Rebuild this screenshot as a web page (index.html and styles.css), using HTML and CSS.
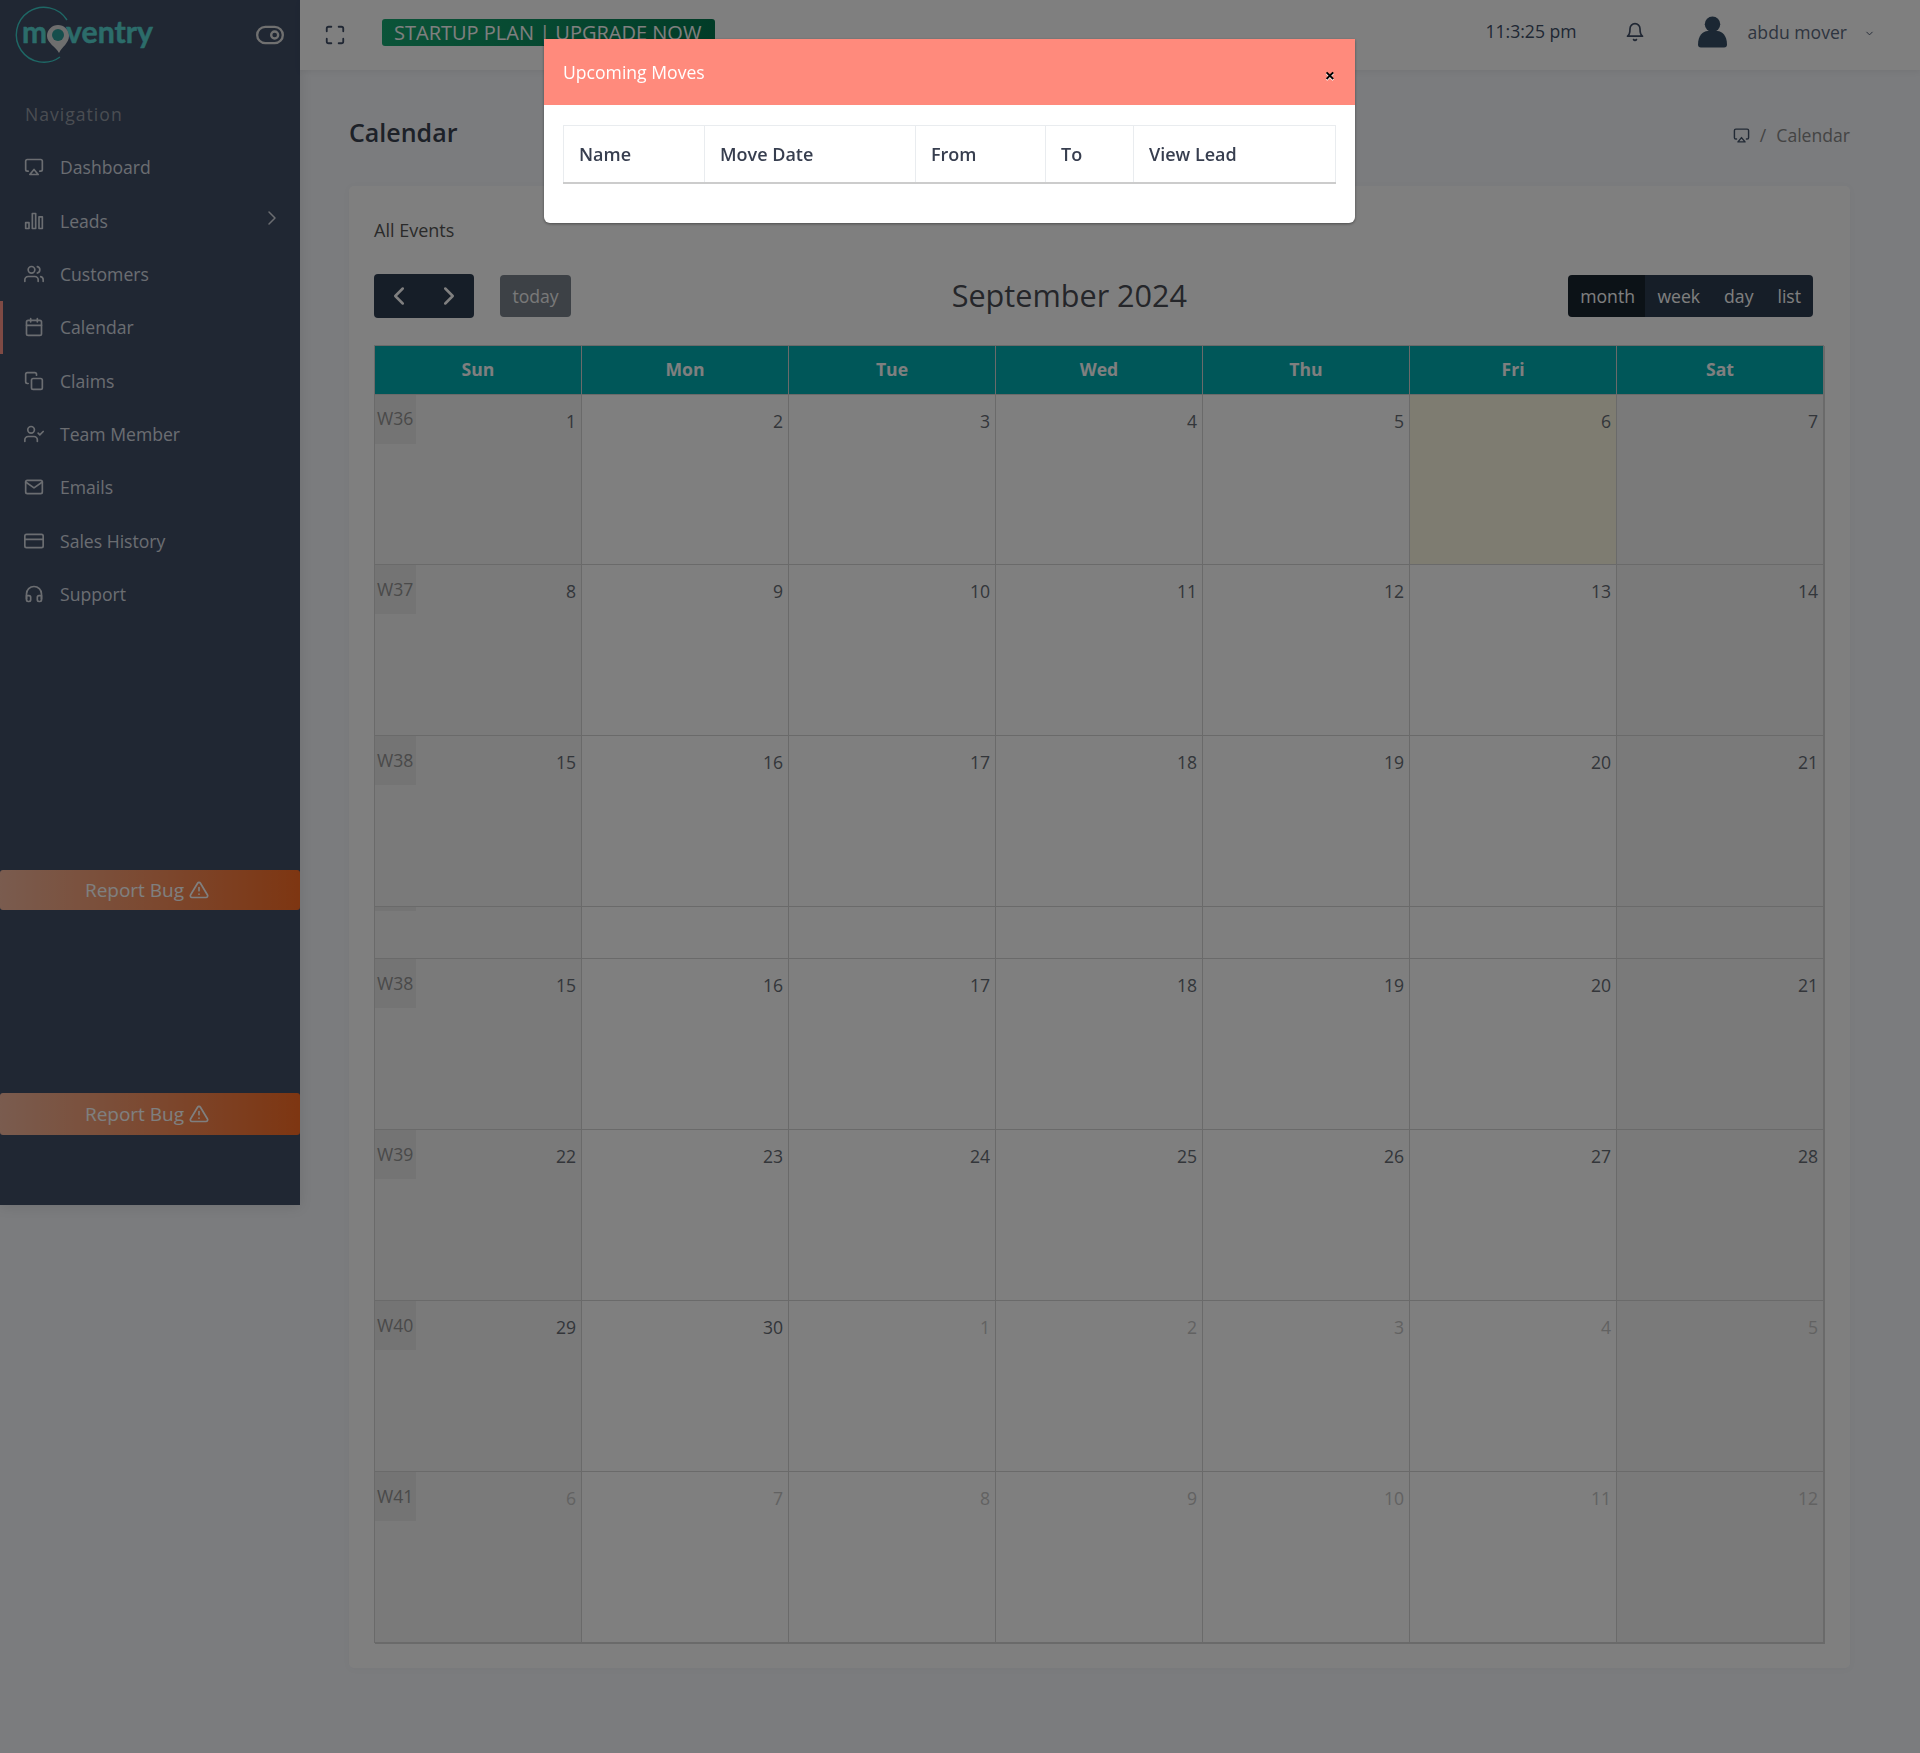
FILE: index.html
```html
<!DOCTYPE html>
<html lang="en">
<head>
  <meta charset="UTF-8" />
  <meta name="viewport" content="width=device-width, initial-scale=1.0"/>
  <title>Moventry - Calendar</title>
  <link rel="stylesheet" href="styles.css">
</head>
<body>
  <div class="layout">
    <aside class="sidebar">
      <div class="brand">
        <svg class="logo" viewBox="0 0 160 70" width="160" height="70">
          <path class="logo-ring" d="M57 20A27.500 27.500 0 1 0 50 57"/>
          <text class="logo-text" x="12" y="43" textLength="25" lengthAdjust="spacingAndGlyphs">m</text>
          <path class="logo-pin" d="M48 25a11 11 0 0 1 11 11c0 7-7 11-10 17c-3-6-12-10-12-17a11 11 0 0 1 11-11z"/>
          <circle class="logo-dot" cx="48" cy="35" r="6"/>
          <text class="logo-text" x="56" y="43" textLength="87" lengthAdjust="spacingAndGlyphs">ventry</text>
        </svg>
        <svg class="icon toggle" viewBox="0 0 24 24" width="28" height="28"><rect x="1" y="5" width="22" height="14" rx="7"/><circle cx="16" cy="12" r="3"/></svg>
      </div>

      <p class="nav-label">Navigation</p>
      <nav class="nav">
        <a class="nav-item"><svg class="icon" viewBox="0 0 24 24"><path d="M5 17H4a2 2 0 0 1-2-2V5a2 2 0 0 1 2-2h16a2 2 0 0 1 2 2v10a2 2 0 0 1-2 2h-1"/><polygon points="12 15 17 21 7 21 12 15"/></svg>Dashboard</a>
        <a class="nav-item"><svg class="icon" viewBox="0 0 24 24"><rect x="2" y="14" width="4" height="7"/><rect x="10" y="3" width="4" height="18"/><rect x="18" y="7" width="4" height="14"/></svg>Leads<svg class="icon nav-arrow" viewBox="0 0 24 24"><polyline points="9 18 15 12 9 6"/></svg></a>
        <a class="nav-item"><svg class="icon" viewBox="0 0 24 24"><path d="M17 21v-2a4 4 0 0 0-4-4H5a4 4 0 0 0-4 4v2"/><circle cx="9" cy="7" r="4"/><path d="M23 21v-2a4 4 0 0 0-3-3.870"/><path d="M16 3.130a4 4 0 0 1 0 7.750"/></svg>Customers</a>
        <a class="nav-item active"><svg class="icon" viewBox="0 0 24 24"><rect x="3" y="4" width="18" height="18" rx="2"/><line x1="16" y1="2" x2="16" y2="6"/><line x1="8" y1="2" x2="8" y2="6"/><line x1="3" y1="10" x2="21" y2="10"/></svg>Calendar</a>
        <a class="nav-item"><svg class="icon" viewBox="0 0 24 24"><rect x="9" y="9" width="13" height="13" rx="2"/><path d="M5 15H4a2 2 0 0 1-2-2V4a2 2 0 0 1 2-2h9a2 2 0 0 1 2 2v1"/></svg>Claims</a>
        <a class="nav-item"><svg class="icon" viewBox="0 0 24 24"><path d="M16 21v-2a4 4 0 0 0-4-4H5a4 4 0 0 0-4 4v2"/><circle cx="8.500" cy="7" r="4"/><polyline points="17 11 19 13 23 9"/></svg>Team Member</a>
        <a class="nav-item"><svg class="icon" viewBox="0 0 24 24"><path d="M4 4h16c1.100 0 2 .9 2 2v12c0 1.100-.9 2-2 2H4c-1.100 0-2-.9-2-2V6c0-1.100.9-2 2-2z"/><polyline points="22,6 12,13 2,6"/></svg>Emails</a>
        <a class="nav-item"><svg class="icon" viewBox="0 0 24 24"><rect x="1" y="4" width="22" height="16" rx="2"/><line x1="1" y1="10" x2="23" y2="10"/></svg>Sales History</a>
        <a class="nav-item"><svg class="icon" viewBox="0 0 24 24"><path d="M3 18v-6a9 9 0 0 1 18 0v6"/><path d="M21 19a2 2 0 0 1-2 2h-1a2 2 0 0 1-2-2v-3a2 2 0 0 1 2-2h3zM3 19a2 2 0 0 0 2 2h1a2 2 0 0 0 2-2v-3a2 2 0 0 0-2-2H3z"/></svg>Support</a>
      </nav>

      <a class="report-bug first">Report Bug <svg class="icon" viewBox="0 0 24 24"><path d="M10.290 3.860L1.820 18a2 2 0 0 0 1.710 3h16.940a2 2 0 0 0 1.710-3L13.710 3.860a2 2 0 0 0-3.420 0z"/><line x1="12" y1="9" x2="12" y2="13"/><line x1="12" y1="17" x2="12.010" y2="17"/></svg></a>
      <a class="report-bug second">Report Bug <svg class="icon" viewBox="0 0 24 24"><path d="M10.290 3.860L1.820 18a2 2 0 0 0 1.710 3h16.940a2 2 0 0 0 1.710-3L13.710 3.860a2 2 0 0 0-3.420 0z"/><line x1="12" y1="9" x2="12" y2="13"/><line x1="12" y1="17" x2="12.010" y2="17"/></svg></a>
    </aside>

    <div class="main">
      <header class="topbar">
        <svg class="icon expand" viewBox="0 0 24 24" width="24" height="24"><path d="M8 3H5a2 2 0 0 0-2 2v3m18 0V5a2 2 0 0 0-2-2h-3m0 18h3a2 2 0 0 0 2-2v-3M3 16v3a2 2 0 0 0 2 2h3"/></svg>
        <a class="plan">STARTUP PLAN | UPGRADE NOW</a>
        <div class="topbar-right">
          <span class="clock">11:3:25 pm</span>
          <svg class="icon bell" viewBox="0 0 24 24"><path d="M18 8A6 6 0 0 0 6 8c0 7-3 9-3 9h18s-3-2-3-9"/><path d="M13.730 21a2 2 0 0 1-3.460 0"/></svg>
          <svg class="avatar" viewBox="0 0 30 32"><circle cx="15" cy="8" r="8"/><path d="M0 29c0-9 5-14 10-14h10c5 0 10 5 10 14a3 3 0 0 1-3 3H3a3 3 0 0 1-3-3z"/></svg>
          <span class="username">abdu mover</span>
          <svg class="icon caret" viewBox="0 0 24 24"><polyline points="6 9 12 15 18 9"/></svg>
        </div>
      </header>

      <div class="page-head">
        <h1>Calendar</h1>
        <div class="crumbs">
          <svg class="icon" viewBox="0 0 24 24"><path d="M5 17H4a2 2 0 0 1-2-2V5a2 2 0 0 1 2-2h16a2 2 0 0 1 2 2v10a2 2 0 0 1-2 2h-1"/><polygon points="12 15 17 21 7 21 12 15"/></svg>
          <span>/</span>
          <span>Calendar</span>
        </div>
      </div>

      <section class="card">
        <h2>All Events</h2>
        <div class="toolbar">
          <div class="toolbar-left">
            <div class="btn-group pager">
              <button class="btn"><svg class="icon" viewBox="0 0 24 24"><polyline points="15 18 9 12 15 6"/></svg></button>
              <button class="btn"><svg class="icon" viewBox="0 0 24 24"><polyline points="9 18 15 12 9 6"/></svg></button>
            </div>
            <button class="btn today">today</button>
          </div>
          <h3>September 2024</h3>
          <div class="btn-group views">
            <button class="btn on">month</button>
            <button class="btn">week</button>
            <button class="btn">day</button>
            <button class="btn">list</button>
          </div>
        </div>

        <table class="cal">
          <thead>
            <tr><th>Sun</th><th>Mon</th><th>Tue</th><th>Wed</th><th>Thu</th><th>Fri</th><th>Sat</th></tr>
          </thead>
          <tbody>
            <tr class="week first-week">
              <td class="off"><div class="cell"><span class="wk">W36</span><span class="num">1</span></div></td>
              <td><div class="cell"><span class="num">2</span></div></td>
              <td><div class="cell"><span class="num">3</span></div></td>
              <td><div class="cell"><span class="num">4</span></div></td>
              <td><div class="cell"><span class="num">5</span></div></td>
              <td class="now"><div class="cell"><span class="num">6</span></div></td>
              <td class="off"><div class="cell"><span class="num">7</span></div></td>
            </tr>
            <tr class="week">
              <td class="off"><div class="cell"><span class="wk">W37</span><span class="num">8</span></div></td>
              <td><div class="cell"><span class="num">9</span></div></td>
              <td><div class="cell"><span class="num">10</span></div></td>
              <td><div class="cell"><span class="num">11</span></div></td>
              <td><div class="cell"><span class="num">12</span></div></td>
              <td><div class="cell"><span class="num">13</span></div></td>
              <td class="off"><div class="cell"><span class="num">14</span></div></td>
            </tr>
            <tr class="week">
              <td class="off"><div class="cell"><span class="wk">W38</span><span class="num">15</span></div></td>
              <td><div class="cell"><span class="num">16</span></div></td>
              <td><div class="cell"><span class="num">17</span></div></td>
              <td><div class="cell"><span class="num">18</span></div></td>
              <td><div class="cell"><span class="num">19</span></div></td>
              <td><div class="cell"><span class="num">20</span></div></td>
              <td class="off"><div class="cell"><span class="num">21</span></div></td>
            </tr>
            <tr class="stub">
              <td class="off"><div class="cell"><span class="wk"></span></div></td>
              <td></td><td></td><td></td><td></td><td></td>
              <td class="off"></td>
            </tr>
            <tr class="week">
              <td class="off"><div class="cell"><span class="wk">W38</span><span class="num">15</span></div></td>
              <td><div class="cell"><span class="num">16</span></div></td>
              <td><div class="cell"><span class="num">17</span></div></td>
              <td><div class="cell"><span class="num">18</span></div></td>
              <td><div class="cell"><span class="num">19</span></div></td>
              <td><div class="cell"><span class="num">20</span></div></td>
              <td class="off"><div class="cell"><span class="num">21</span></div></td>
            </tr>
            <tr class="week">
              <td class="off"><div class="cell"><span class="wk">W39</span><span class="num">22</span></div></td>
              <td><div class="cell"><span class="num">23</span></div></td>
              <td><div class="cell"><span class="num">24</span></div></td>
              <td><div class="cell"><span class="num">25</span></div></td>
              <td><div class="cell"><span class="num">26</span></div></td>
              <td><div class="cell"><span class="num">27</span></div></td>
              <td class="off"><div class="cell"><span class="num">28</span></div></td>
            </tr>
            <tr class="week">
              <td class="off"><div class="cell"><span class="wk">W40</span><span class="num">29</span></div></td>
              <td><div class="cell"><span class="num">30</span></div></td>
              <td><div class="cell"><span class="num other">1</span></div></td>
              <td><div class="cell"><span class="num other">2</span></div></td>
              <td><div class="cell"><span class="num other">3</span></div></td>
              <td><div class="cell"><span class="num other">4</span></div></td>
              <td class="off"><div class="cell"><span class="num other">5</span></div></td>
            </tr>
            <tr class="week">
              <td class="off"><div class="cell"><span class="wk">W41</span><span class="num other">6</span></div></td>
              <td><div class="cell"><span class="num other">7</span></div></td>
              <td><div class="cell"><span class="num other">8</span></div></td>
              <td><div class="cell"><span class="num other">9</span></div></td>
              <td><div class="cell"><span class="num other">10</span></div></td>
              <td><div class="cell"><span class="num other">11</span></div></td>
              <td class="off"><div class="cell"><span class="num other">12</span></div></td>
            </tr>
          </tbody>
        </table>
      </section>
    </div>
  </div>

  <div class="backdrop">
    <div class="modal">
      <div class="modal-head">
        <h4>Upcoming Moves</h4>
        <button class="close">×</button>
      </div>
      <div class="modal-body">
        <table class="moves">
          <thead>
            <tr>
              <th class="col-name">Name</th>
              <th class="col-date">Move Date</th>
              <th class="col-from">From</th>
              <th class="col-to">To</th>
              <th>View Lead</th>
            </tr>
          </thead>
        </table>
      </div>
    </div>
  </div>
</body>
</html>
```

FILE: styles.css
```css
* {
  box-sizing: border-box;
}

body {
  margin: 0;
  min-height: 1753px;
  font-family: "Open Sans", sans-serif;
  font-size: 17.6px;
  background-color: #f6f8fc;
  color: #666;
}

.icon {
  width: 20px;
  height: 20px;
  fill: none;
  stroke: currentColor;
  stroke-width: 2;
  stroke-linecap: round;
  stroke-linejoin: round;
  flex-shrink: 0;
}

.layout {
  display: flex;
  align-items: flex-start;
}

/* sidebar */
.sidebar {
  width: 300px;
  height: 1205px;
  flex-shrink: 0;
  background: #404e67;
  color: #d6dbe2;
  box-shadow: 0 2px 12px rgba(0,0,0,0.1);
}

.brand {
  height: 70px;
  display: flex;
  align-items: center;
  justify-content: space-between;
  padding: 0 16px 0 10px;
}

.logo-ring {
  fill: none;
  stroke: #3ccfca;
  stroke-width: 1.4;
}

.logo-text {
  font-family: Lato, sans-serif;
  font-size: 31px;
  font-weight: 700;
  fill: #58d8d4;
  stroke: #58d8d4;
  stroke-width: 0.5;
  stroke-linejoin: round;
}

.logo-pin {
  fill: #dcdcdc;
}

.logo-dot {
  fill: #2c9c98;
}

.toggle {
  width: 28px;
  height: 28px;
  color: #e0e0e0;
}

.nav-label {
  margin: 0;
  padding: 32px 0 0 25px;
  height: 70.8px;
  line-height: 24px;
  font-size: 17.6px;
  letter-spacing: 1px;
  color: #959ba5;
}

.nav {
  display: flex;
  flex-direction: column;
}

.nav-item {
  height: 53.3px;
  display: flex;
  align-items: center;
  gap: 16px;
  padding-left: 24px;
  position: relative;
}

.nav-item.active {
  border-left: 3px solid #ff9488;
  padding-left: 21px;
}

.nav-arrow {
  position: absolute;
  right: 16px;
  top: 12px;
  width: 24px;
  height: 24px;
  stroke-width: 1.5;
}

.report-bug {
  display: flex;
  align-items: center;
  justify-content: center;
  gap: 5px;
  padding-right: 6px;
  font-size: 19px;
  color: #fff;
  background: linear-gradient(to right, #f4b89e, #fc6c24);
  border-radius: 3px;
}

.report-bug.first {
  height: 40px;
  padding-top: 1px;
  margin-top: 249.2px;
}

.report-bug.second {
  height: 42px;
  margin-top: 183px;
}

/* main area */
.main {
  flex: 1;
  min-width: 0;
}

.topbar {
  height: 70px;
  background: #fff;
  box-shadow: 0 2px 6px rgba(0,0,0,0.06);
  display: flex;
  align-items: flex-start;
  padding-left: 24px;
  color: #404e67;
}

.expand {
  width: 22px;
  height: 22px;
  margin-top: 24px;
}

.plan {
  margin: 19px 0 0 36px;
  height: 27px;
  line-height: 27px;
  padding: 0 14px 0 12px;
  font-size: 20px;
  color: #fff;
  background: linear-gradient(to right, #16a872, #03784f);
  border-radius: 3px;
  white-space: nowrap;
}

.topbar-right {
  margin-left: auto;
  height: 64px;
  display: flex;
  align-items: center;
}

.clock {
  margin-right: 48px;
  margin-top: -3px;
}

.bell {
  width: 20px;
  height: 20px;
  margin-right: 53px;
}

.avatar {
  width: 29px;
  height: 32px;
  fill: #364e66;
  margin-right: 21px;
}

.username {
  color: #5c6a80;
}

.caret {
  width: 11px;
  height: 11px;
  margin: 2px 45px 0 17px;
}

.page-head {
  height: 116px;
  display: flex;
  justify-content: space-between;
  padding: 45px 70px 0 49px;
}

h1 {
  margin: 0;
  font-size: 25px;
  line-height: 34px;
  font-weight: 600;
  color: #3a4350;
}

.crumbs {
  display: flex;
  align-items: center;
  gap: 10px;
  height: 40px;
  color: #888;
}

.crumbs .icon {
  width: 17px;
  height: 17px;
  color: #44546a;
}

/* calendar card */
.card {
  margin: 0 70px 0 49px;
  padding: 31px 25px 25px;
  background: #fff;
  border-radius: 5px;
  box-shadow: 0 1px 8px rgba(0,0,0,0.03);
}

h2 {
  margin: 0;
  font-size: 18px;
  line-height: 26px;
  font-weight: 500;
  color: #555;
}

.toolbar {
  margin-top: 31px;
  height: 44px;
  padding-right: 12px;
  display: flex;
  align-items: center;
  justify-content: space-between;
}

.toolbar-left {
  display: flex;
  align-items: center;
  gap: 26px;
  width: 197px;
}

h3 {
  margin: -2px 0 0;
  font-size: 30.6px;
  font-weight: 400;
  color: #4a4d55;
}

.btn-group {
  display: flex;
  border-radius: 4px;
  overflow: hidden;
}

.btn {
  border: none;
  background: #2c3c50;
  color: #fff;
  font: inherit;
  padding: 0 12px;
  display: flex;
  align-items: center;
}

.pager {
  height: 44px;
}

.pager .btn {
  width: 50px;
  padding: 0;
  justify-content: center;
}

.pager .icon {
  width: 30px;
  height: 30px;
}

.views {
  height: 42px;
}

.views .btn.on {
  padding: 0 10.5px 0 12.5px;
  background: #18242f;
}

.today {
  height: 42px;
  width: 71px;
  justify-content: center;
  background: #7a828c;
  color: #f2f2f2;
  border-radius: 4px;
}

.cal {
  margin-top: 27px;
  width: 1450px;
  table-layout: fixed;
  border-collapse: collapse;
  border: 1px solid #d4d4d4;
  box-shadow: 1px 1px 0 #d4d4d4;
}

.cal th,
.cal td {
  width: 207px;
  padding: 0;
  border: 1px solid #d4d4d4;
}

.cal th {
  height: 49px;
  padding-bottom: 2px;
  background: #00aeb3;
  color: #fff;
  font-weight: 700;
  font-size: 17.6px;
}

.cal td {
  vertical-align: top;
}

.week td {
  height: 171px;
}

.first-week td {
  height: 170px;
}

.stub td {
  height: 52px;
}

.cal td.off {
  background: #f4f4f4;
}

.cal td.now {
  background: #fcf8e3;
}

.cell {
  display: flex;
}

.wk {
  width: 41px;
  height: 49px;
  padding: 11px 0 0 2px;
  background: #e8e8e8;
  color: #949494;
  line-height: 26px;
}

.first-week .wk {
  padding-top: 10px;
}

.stub .wk {
  height: 4px;
  padding: 0;
}

.num {
  margin-left: auto;
  padding: 13px 5px 0 0;
  line-height: 26px;
  color: #666c74;
}

.num.other {
  color: #c4c4c4;
}

/* modal */
.backdrop {
  position: fixed;
  top: 0;
  right: 0;
  bottom: 0;
  left: 0;
  padding: 39px 21px 0 0;
  display: flex;
  justify-content: center;
  align-items: flex-start;
  background: rgba(0,0,0,0.5);
}

.modal {
  width: 811px;
  background: #fff;
  border-radius: 0 0 6px 6px;
  overflow: hidden;
  box-shadow: 0 1px 3px rgba(0,0,0,0.4);
}

.modal-head {
  height: 66px;
  background: #ff8a7c;
  display: flex;
  align-items: center;
  justify-content: space-between;
  padding: 0 20px 0 19px;
}

h4 {
  margin: 0;
  color: #fff;
  font-size: 17.6px;
  font-weight: 400;
}

.close {
  border: none;
  background: none;
  padding: 0;
  margin-top: 5px;
  font: 700 18px "Open Sans", sans-serif;
  color: #000;
  text-shadow: 0 1px 0 #fff;
}

.modal-body {
  padding: 20px 19px 39px;
}

.moves {
  width: 773px;
  table-layout: fixed;
  border-collapse: collapse;
}

.moves th {
  height: 57px;
  padding: 0 15px;
  text-align: left;
  font-size: 18px;
  font-weight: 600;
  color: #373e4f;
  border: 1px solid #e9ecef;
  border-bottom: 2px solid #ccc;
}

.col-name {
  width: 141px;
}

.col-date {
  width: 211px;
}

.col-from {
  width: 130px;
}

.col-to {
  width: 88px;
}
```
